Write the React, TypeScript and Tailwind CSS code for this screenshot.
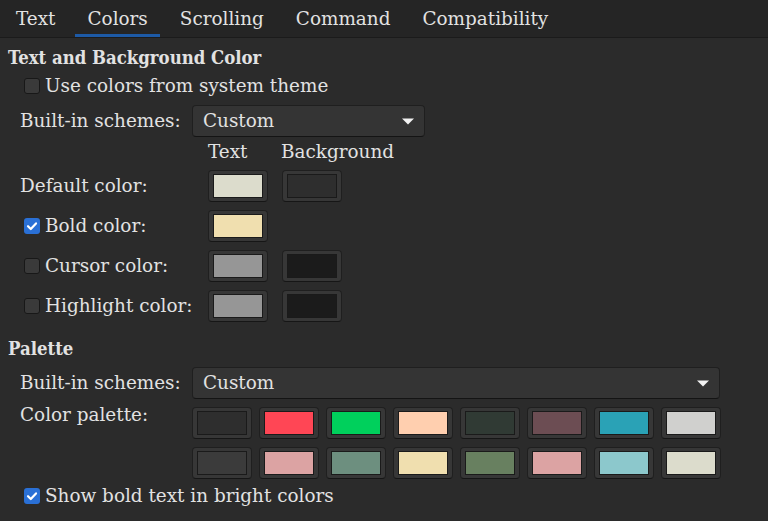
import { ReactNode } from 'react';

const tabs = ['Text', 'Colors', 'Scrolling', 'Command', 'Compatibility'];

const paletteTop = ['#2e2e2e', '#ff4655', '#00d05c', '#ffcfaf', '#303a34', '#6c4d53', '#2aa2b6', '#d0d0ce'];
const paletteBottom = ['#3b3b3b', '#dca3a3', '#6d8f7f', '#f0dfaf', '#688060', '#dca3a3', '#8cc8cc', '#dcdccc'];

export default function App() {
  return (
    <div className="w-[768px] h-[521px] overflow-hidden bg-[#2b2b2b] text-[#e2e2e2] text-[18.4px] font-['DejaVu_Serif',serif]">
      <div className="flex h-[38px] bg-[#252525] border-b border-[#1b1b1b]">
        {tabs.map((t) => (
          <div key={t} className="relative flex items-center px-4 h-full">
            {t}
            {t === 'Colors' && <div className="absolute left-1 right-1 bottom-0 h-[3px] bg-[#1d5aa6]" />}
          </div>
        ))}
      </div>

      <div className="px-2">
        <h2 className="mt-2 h-6 leading-6 font-bold [font-stretch:condensed]">Text and Background Color</h2>

        <div className="mt-1 h-6 flex items-center pl-4 gap-[5px]">
          <Checkbox />
          <span>Use colors from system theme</span>
        </div>

        <div className="mt-[7px] flex items-center pl-3">
          <div className="w-[172px]">Built-in schemes:</div>
          <Combo width="w-[233px]" />
        </div>

        <div className="mt-[3px] h-6 flex items-center pl-[200px] leading-6">
          <span className="w-[73px]">Text</span>
          <span>Background</span>
        </div>

        <div className="mt-[6px] flex flex-col gap-2">
          <ColorRow label={<span className="pl-3">Default color:</span>} text="#dcdccc" bg="#2e2e2e" />
          <ColorRow label={<CheckLabel checked>Bold color:</CheckLabel>} text="#f0dfaf" />
          <ColorRow label={<CheckLabel>Cursor color:</CheckLabel>} text="#969696" bg="#1b1b1b" />
          <ColorRow label={<CheckLabel>Highlight color:</CheckLabel>} text="#969696" bg="#1b1b1b" />
        </div>

        <h2 className="mt-[15px] h-6 leading-6 font-bold [font-stretch:condensed]">Palette</h2>

        <div className="mt-[6px] flex items-center pl-3">
          <div className="w-[172px]">Built-in schemes:</div>
          <Combo width="w-[528px]" />
        </div>

        <div className="mt-2 flex items-start pl-3">
          <div className="w-[172px] leading-5 -mt-[2px]">Color palette:</div>
          <div className="flex flex-col gap-2">
            <div className="flex gap-[7px]">
              {paletteTop.map((c, i) => (
                <Swatch key={i} color={c} />
              ))}
            </div>
            <div className="flex gap-[7px]">
              {paletteBottom.map((c, i) => (
                <Swatch key={i} color={c} />
              ))}
            </div>
          </div>
        </div>

        <div className="mt-[5px] h-6 flex items-center pl-4 gap-[5px]">
          <Checkbox checked />
          <span>Show bold text in bright colors</span>
        </div>
      </div>
    </div>
  );
}

function ColorRow({ label, text, bg }: { label: ReactNode; text: string; bg?: string }) {
  return (
    <div className="flex items-center h-8">
      <div className="w-[200px] flex items-center">{label}</div>
      <div className="flex gap-[14px]">
        <Swatch color={text} />
        {bg && <Swatch color={bg} />}
      </div>
    </div>
  );
}

function CheckLabel({ checked, children }: { checked?: boolean; children: ReactNode }) {
  return (
    <div className="flex items-center pl-4 gap-[5px]">
      <Checkbox checked={checked} />
      <span>{children}</span>
    </div>
  );
}

function Swatch({ color }: { color: string }) {
  return (
    <div className="w-[60px] h-8 rounded-[4px] bg-[#373737] border border-[#1f1f1f] border-b-[#161616] px-1 py-[3px]">
      <div className="w-full h-full border border-[#1a1a1a]" style={{ background: color }} />
    </div>
  );
}

function Checkbox({ checked }: { checked?: boolean }) {
  if (checked) {
    return (
      <div className="w-4 h-4 rounded-[3px] bg-[#2a70d6] flex items-center justify-center">
        <svg width="12" height="12" viewBox="0 0 12 12">
          <path d="M2 6.2 L4.8 9 L10 3.4" fill="none" stroke="white" strokeWidth="2.2" strokeLinecap="round" strokeLinejoin="round" />
        </svg>
      </div>
    );
  }
  return <div className="w-4 h-4 rounded-[3px] bg-[#3a3a3a] border border-[#181818]" />;
}

function Combo({ width }: { width: string }) {
  return (
    <div className={`${width} h-8 rounded-[4px] bg-[#343434] border border-[#1f1f1f] border-b-[#141414] flex items-center justify-between pl-[10px] pr-[10px]`}>
      <span>Custom</span>
      <svg width="12" height="7" viewBox="0 0 12 7">
        <polygon points="0,0.5 12,0.5 6,6.5" fill="#f2f2f2" />
      </svg>
    </div>
  );
}
